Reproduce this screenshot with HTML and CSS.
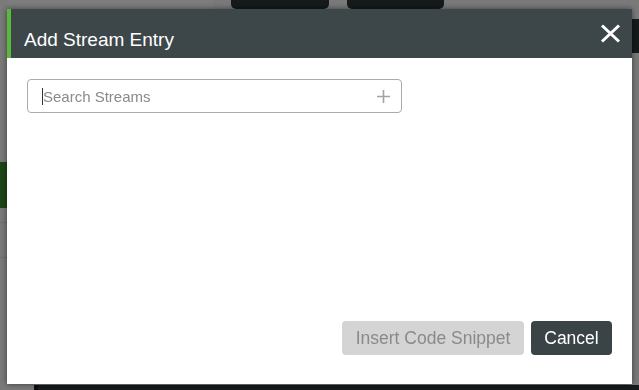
FILE: index.html
```html
<!DOCTYPE html>
<html>
<head>
  <meta charset="UTF-8">
  <title>Add Stream Entry</title>
  <link rel="stylesheet" href="styles.css">
</head>
<body>
  <!-- page behind the dialog -->
  <div class="page">
    <div class="topbar">
      <div class="tb-field"></div>
      <div class="tb-btn tb-btn-1"></div>
      <div class="tb-btn tb-btn-2"></div>
    </div>
    <div class="page-main">
      <div class="sidebar">
        <div class="side-green"></div>
        <div class="side-row"></div>
      </div>
    </div>
    <div class="right-dark"></div>
    <div class="bottom-dark"></div>
  </div>
  <div class="backdrop"></div>

  <div class="modal">
    <div class="modal-header">
      <span class="modal-title">Add Stream Entry</span>
      <button class="modal-close" aria-label="Close">
        <svg width="21" height="19" viewBox="0 0 21 19">
          <path d="M2 1.5 L19 17.5 M19 1.5 L2 17.5" stroke="#fff" stroke-width="3" fill="none"/>
        </svg>
      </button>
    </div>
    <div class="modal-body">
      <div class="search-box">
        <input type="text" class="search-input" placeholder="Search Streams">
        <svg class="search-plus" width="15" height="15" viewBox="0 0 15 15">
          <path d="M7.5 1 V14 M1 7.5 H14" stroke="#a3a3a3" stroke-width="1.6" fill="none"/>
        </svg>
      </div>
    </div>
    <div class="modal-footer">
      <button class="btn btn-insert" disabled>Insert Code Snippet</button>
      <button class="btn btn-cancel">Cancel</button>
    </div>
  </div>
</body>
</html>
```

FILE: styles.css
```css
html, body {
  margin: 0;
  height: 100%;
}

body {
  font-family: "Liberation Sans", Arial, sans-serif;
  background-color: #f2f2f2;
  overflow: hidden;
}

.page {
  height: 100%;
  display: flex;
  flex-direction: column;
}

.topbar {
  height: 52px;
  background-color: #f4f4f4;
  display: flex;
  gap: 18px;
  padding-left: 8px;
}

.tb-field {
  width: 205px;
  height: 9px;
  background-color: #fbfbfb;
  border-radius: 0 0 4px 4px;
}

.tb-btn {
  width: 98px;
  height: 9px;
  background-color: #2b3436;
  border-radius: 0 0 5px 5px;
}

.tb-btn-2 {
  width: 97px;
}

.page-main {
  flex: 1;
  display: flex;
}

.sidebar {
  width: 40px;
  padding-top: 110px;
}

.side-green {
  height: 46px;
  background-color: #3a8a2a;
}

.side-row {
  height: 34px;
  margin-top: 14px;
  border-top: 1px solid #dddddd;
  border-bottom: 1px solid #dddddd;
}

.right-dark {
  position: absolute;
  top: 19px;
  right: 0;
  width: 10px;
  height: 34px;
  background-color: #2b3436;
}

.bottom-dark {
  position: absolute;
  left: 34px;
  right: 0;
  bottom: 0;
  height: 5px;
  background-color: #2b3436;
  border-left: 4px solid #1a1a1a;
}

.backdrop {
  position: fixed;
  inset: 0;
  background-color: rgba(0, 0, 0, 0.5);
}

.modal {
  position: fixed;
  left: 7px;
  top: 9px;
  width: 625px;
  height: 375px;
  background-color: #ffffff;
  box-shadow: 0 0 6px rgba(0, 0, 0, 0.5);
  display: flex;
  flex-direction: column;
}

.modal-header {
  height: 49px;
  box-sizing: border-box;
  background-color: #3d4649;
  border-left: 4px solid #5cb83c;
  display: flex;
  align-items: center;
  justify-content: space-between;
  padding: 2px 11px 0 13px;
}

.modal-title {
  color: #ffffff;
  font-size: 19px;
  margin-top: 10px;
}

.modal-close {
  background: none;
  border: none;
  padding: 0;
  margin-bottom: 3px;
  cursor: pointer;
  display: flex;
}

.modal-body {
  flex: 1;
  padding: 21px 20px 0 20px;
}

.search-box {
  width: 375px;
  height: 34px;
  box-sizing: border-box;
  border: 1px solid #ababab;
  border-radius: 4px;
  display: flex;
  align-items: center;
  padding: 0 10px 0 14px;
}

.search-input {
  flex: 1;
  border: none;
  outline: none;
  font-family: "Liberation Sans", Arial, sans-serif;
  font-size: 15px;
  color: #333333;
  padding: 0;
  border-left: 1px solid #333333;
}

.search-input::placeholder {
  color: #8a8a8a;
}

.modal-footer {
  display: flex;
  justify-content: flex-end;
  gap: 7px;
  padding: 0 20px 29px 0;
}

.btn {
  height: 34px;
  border: none;
  border-radius: 4px;
  font-family: "Liberation Sans", Arial, sans-serif;
  font-size: 17.5px;
  padding: 0 12px;
}

.btn-insert {
  width: 182px;
  background-color: #d4d4d4;
  color: #8a8a8a;
}

.btn-cancel {
  width: 81px;
  background-color: #3a4346;
  color: #ffffff;
  cursor: pointer;
}
```
